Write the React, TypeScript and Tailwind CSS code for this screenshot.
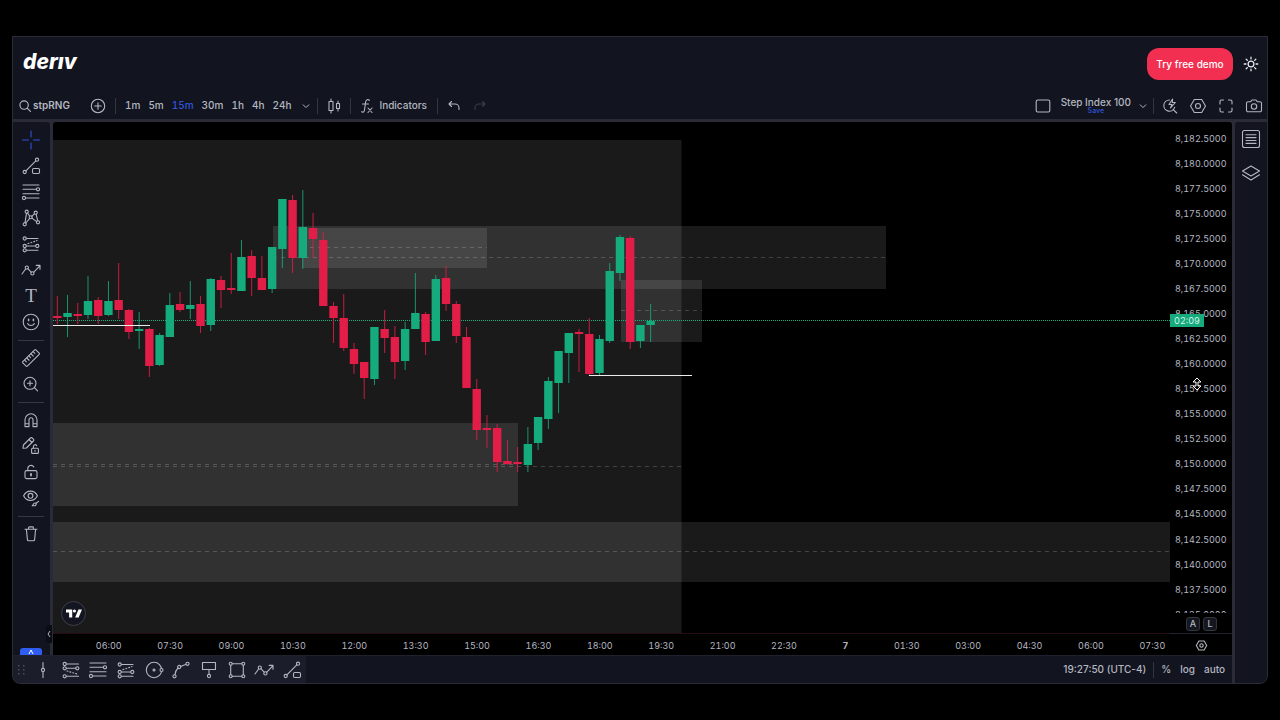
import type { ReactNode } from 'react'

type Candle = [up: number, high: number, low: number, top: number, bottom: number]

// one entry per 15 minute bar, values are vertical chart units
const CANDLES: Candle[] = [
  [0, 296, 324, 316, 318],
  [1, 295, 337, 313, 317],
  [0, 303, 324, 314, 316],
  [1, 276, 319, 301, 315],
  [0, 297, 324, 300, 316],
  [1, 281, 316, 301, 315],
  [0, 263, 319, 300, 310],
  [0, 309, 339, 310, 332],
  [1, 312, 349, 329, 331],
  [0, 328, 377, 329, 366],
  [1, 333, 366, 335, 365],
  [1, 293, 337, 305, 337],
  [0, 292, 312, 304, 310],
  [1, 281, 319, 305, 309],
  [0, 296, 333, 304, 326],
  [1, 278, 331, 279, 325],
  [0, 276, 308, 280, 290],
  [0, 253, 294, 288, 290],
  [1, 240, 291, 257, 291],
  [0, 250, 296, 256, 278],
  [0, 256, 290, 278, 290],
  [1, 247, 293, 247, 289],
  [1, 199, 268, 199, 249],
  [0, 195, 273, 200, 258],
  [1, 190, 269, 227, 258],
  [0, 213, 258, 228, 239],
  [0, 232, 306, 240, 306],
  [0, 302, 343, 306, 318],
  [0, 294, 351, 318, 348],
  [0, 343, 374, 349, 364],
  [0, 362, 399, 362, 378],
  [1, 327, 385, 327, 379],
  [0, 310, 353, 329, 338],
  [0, 326, 379, 337, 362],
  [1, 322, 370, 329, 361],
  [1, 273, 329, 313, 329],
  [0, 312, 355, 314, 342],
  [1, 275, 341, 279, 341],
  [0, 266, 311, 278, 304],
  [0, 301, 343, 304, 336],
  [0, 327, 388, 337, 388],
  [0, 379, 440, 389, 430],
  [0, 415, 448, 428, 430],
  [0, 424, 472, 428, 462],
  [0, 440, 465, 461, 464],
  [0, 447, 472, 462, 464],
  [1, 427, 472, 444, 465],
  [1, 417, 450, 417, 443],
  [1, 377, 429, 381, 419],
  [1, 351, 413, 351, 383],
  [1, 333, 383, 333, 353],
  [0, 329, 372, 332, 334],
  [0, 318, 375, 334, 374],
  [1, 335, 375, 339, 373],
  [1, 263, 343, 271, 341],
  [1, 235, 281, 237, 273],
  [0, 236, 349, 238, 342],
  [1, 325, 348, 325, 341],
  [1, 304, 342, 321, 325],
]

const PRICES = [
  '8,182.5000', '8,180.0000', '8,177.5000', '8,175.0000', '8,172.5000',
  '8,170.0000', '8,167.5000', '8,165.0000', '8,162.5000', '8,160.0000',
  '8,157.5000', '8,155.0000', '8,152.5000', '8,150.0000', '8,147.5000',
  '8,145.0000', '8,142.5000', '8,140.0000', '8,137.5000', '8,135.0000',
]

const TIMES = [
  '06:00', '07:30', '09:00', '10:30', '12:00', '13:30', '15:00', '16:30', '18:00',
  '19:30', '21:00', '22:30', '7', '01:30', '03:00', '04:30', '06:00', '07:30',
]

const INTERVALS = ['1m', '5m', '15m', '30m', '1h', '4h', '24h']

function Icon({ children, className = 'size-5' }: { children: ReactNode; className?: string }) {
  return (
    <svg
      viewBox="0 0 20 20"
      className={className}
      fill="none"
      stroke="currentColor"
      strokeWidth="1.1"
      strokeLinecap="round"
      strokeLinejoin="round"
      aria-hidden="true"
    >
      {children}
    </svg>
  )
}

const trendShape = (
  <>
    <circle cx="16" cy="3.7" r="1.6" />
    <circle cx="3.7" cy="16" r="1.6" />
    <path d="M4.9 14.8 14.8 4.9" />
    <rect x="11.5" y="12.5" width="7" height="5" rx="1.2" />
  </>
)

const fibLines = (
  <>
    <path d="M2 3h16M2 7.3h13.4M2 11.7h16M4.6 16H18" />
    <circle cx="17" cy="7.3" r="1.6" />
    <circle cx="3" cy="16" r="1.6" />
  </>
)

const arrowPath = (
  <>
    <path d="m1 14 3.6-5M7 8.8l3.2 3.4M12.6 12.3 19 5.7M15.2 5.4H19v3.8" />
    <circle cx="5.8" cy="7.6" r="1.6" />
    <circle cx="11.4" cy="13.4" r="1.6" />
  </>
)

const forecast = (
  <>
    <path d="M5.4 4.5H17M5.4 12h9.2M5.4 16.3H17" />
    <path d="M7 9.6l9-3" strokeDasharray="1 2" />
    <circle cx="3.7" cy="4.5" r="1.6" />
    <circle cx="3.7" cy="12" r="1.6" />
    <circle cx="16.3" cy="12" r="1.6" />
    <circle cx="3.7" cy="16.3" r="1.6" />
  </>
)

const DRAW_TOOLS: { label: string; icon: ReactNode }[][] = [
  [
    { label: 'Crosshair', icon: <path className="text-[#3054d8]" stroke="currentColor" d="M10 1v6M10 13v6M1.5 10h6M12.5 10h6" /> },
    { label: 'Trend line', icon: trendShape },
    { label: 'Fib retracement', icon: fibLines },
    {
      label: 'Patterns',
      icon: (
        <>
          <path d="M4 14.8 5.5 5.3M6.6 5.1l2 2.9M10.8 8.3l2.6-2.4M15.1 6.2l1.6 6.6M4.8 15l3.7-4.4M11 10.1l4.5 3.5" />
          <circle cx="5.7" cy="3.7" r="1.6" />
          <circle cx="14.7" cy="4.7" r="1.6" />
          <circle cx="3.7" cy="16.3" r="1.6" />
          <circle cx="17" cy="14.3" r="1.6" />
          <circle cx="9.7" cy="9.3" r="1.5" />
        </>
      ),
    },
    { label: 'Forecast', icon: forecast },
    { label: 'Path', icon: arrowPath },
    { label: 'Text', icon: null },
    {
      label: 'Emoji',
      icon: (
        <>
          <circle cx="10" cy="10" r="7.8" />
          <path d="M7.6 7.4v1.2M12.4 7.4v1.2" strokeWidth="1.6" />
          <path d="M6.6 11.6c1.4 2.6 5.4 2.6 6.8 0" />
        </>
      ),
    },
  ],
  [
    {
      label: 'Measure',
      icon: (
        <g transform="rotate(-45 10 10)">
          <rect x="0.8" y="6.8" width="18.4" height="6.4" rx="0.8" />
          <path d="M4 7v2.4M7 7v3.2M10 7v2.4M13 7v3.2M16 7v2.4" />
        </g>
      ),
    },
    {
      label: 'Zoom in',
      icon: (
        <>
          <circle cx="9" cy="9.3" r="6" />
          <path d="m13.4 13.7 3.2 3.2M9 6.8v5M6.5 9.3h5" />
        </>
      ),
    },
  ],
  [
    {
      label: 'Magnet',
      icon: <path d="M4 16.6V9.8a6 6 0 0 1 12 0v6.8h-4V9.8a2 2 0 0 0-4 0v6.8zM4 13.8h4M12 13.8h4" />,
    },
    {
      label: 'Drawing mode',
      icon: (
        <>
          <path d="m2 12.2.4-3.2 7-7a1.3 1.3 0 0 1 1.9 0l1.1 1.1a1.3 1.3 0 0 1 0 1.9l-7 7zM8 3.5l3 3" />
          <rect x="10.6" y="12.2" width="6.8" height="5.2" rx="1" />
          <path d="M12.4 12v-1.6a1.7 1.7 0 0 1 3.3-.6M14 14.4v.9" />
        </>
      ),
    },
    {
      label: 'Lock drawings',
      icon: (
        <>
          <rect x="4" y="8.6" width="12" height="8" rx="1.6" />
          <path d="M6.8 8.4V6.6a3.2 3.2 0 0 1 6-1.5" />
          <path d="M10 11.8v1.8" strokeWidth="1.8" />
        </>
      ),
    },
    {
      label: 'Hide drawings',
      icon: (
        <>
          <path d="M2.6 7.8C5.6 1.6 13.4 1.6 16.4 7.8 13.4 14 5.6 14 2.6 7.8z" />
          <circle cx="9.5" cy="7.8" r="2.4" />
          <path d="M11.2 17.8c1.2-.4.8-2.8 2.8-2.8 1.8 0 1.6 2.8-.8 2.8zM15.4 15l2.2-1.6" />
        </>
      ),
    },
  ],
  [
    {
      label: 'Remove',
      icon: (
        <path d="M4 5.2h12M5.4 5.2l1 10.4a1.3 1.3 0 0 0 1.3 1.2h4.6a1.3 1.3 0 0 0 1.3-1.2l1-10.4M7.6 5V3.8a.9.9 0 0 1 .9-.9h3a.9.9 0 0 1 .9.9V5" />
      ),
    },
  ],
]

const FAVORITES: { label: string; icon: ReactNode }[] = [
  {
    label: 'Vertical line',
    icon: (
      <>
        <circle cx="10" cy="10" r="1.6" />
        <path d="M10 2.5v5.9M10 11.6v5.9" />
      </>
    ),
  },
  {
    label: 'Short position',
    icon: (
      <>
        <path d="M5.4 4H17.5M5.4 8.3h9.2M5.4 16.3H17.5" />
        <path d="M6 11l10 3" strokeDasharray="1 2" />
        <circle cx="3.7" cy="4" r="1.6" />
        <circle cx="3.7" cy="8.3" r="1.6" />
        <circle cx="16.3" cy="8.3" r="1.6" />
        <circle cx="3.7" cy="16.3" r="1.6" />
      </>
    ),
  },
  { label: 'Fib retracement', icon: fibLines },
  { label: 'Long position', icon: forecast },
  {
    label: 'Circle',
    icon: (
      <>
        <circle cx="10" cy="10" r="7.7" />
        <circle cx="10" cy="10" r="1" />
        <circle cx="17.5" cy="10" r="1.5" fill="#1b1e2a" />
      </>
    ),
  },
  {
    label: 'Curve',
    icon: (
      <>
        <path d="M4 14.8C4.4 11.4 5.5 9.4 7 8M9.8 6.5c1.4-.8 3-1.4 5-2" />
        <circle cx="3.5" cy="16.3" r="1.6" />
        <circle cx="8.2" cy="7" r="1.6" />
        <circle cx="16.5" cy="3.8" r="1.6" />
      </>
    ),
  },
  {
    label: 'Callout',
    icon: (
      <>
        <rect x="3.5" y="2.5" width="13" height="7" />
        <path d="M10 9.5v5" />
        <circle cx="10" cy="16" r="1.6" />
      </>
    ),
  },
  {
    label: 'Rectangle',
    icon: (
      <>
        <path d="M5.2 3.7h9.6M5.2 16.3h9.6M3.7 5.2v9.6M16.3 5.2v9.6" />
        <circle cx="3.7" cy="3.7" r="1.5" />
        <circle cx="16.3" cy="3.7" r="1.5" />
        <circle cx="3.7" cy="16.3" r="1.5" />
        <circle cx="16.3" cy="16.3" r="1.5" />
      </>
    ),
  },
  { label: 'Path', icon: arrowPath },
  { label: 'Trend line', icon: trendShape },
]

function Header() {
  return (
    <header className="flex h-[54px] items-center justify-between pr-2 pl-[10px]">
      <a href="#" aria-label="deriv" className="pb-1 text-[21px] leading-6 font-extrabold text-white italic">
        derıv
      </a>
      <div className="flex items-center gap-[10px]">
        <button className="h-8 w-[86px] rounded-xl bg-[#f22f50] text-[10px] font-medium text-white">
          Try free demo
        </button>
        <button aria-label="Switch theme" className="text-[#e6e8ee]">
          <Icon className="size-4">
            <circle cx="10" cy="10" r="3.6" strokeWidth="1.6" />
            <path
              strokeWidth="1.6"
              d="M10 1.5v2.2M10 16.3v2.2M1.5 10h2.2M16.3 10h2.2M4 4l1.5 1.5M14.5 14.5 16 16M4 16l1.5-1.5M14.5 5.5 16 4"
            />
          </Icon>
        </button>
      </div>
    </header>
  )
}

function Divider() {
  return <span className="h-4 w-px bg-[#33353f]" />
}

function Chevron() {
  return (
    <Icon className="size-2">
      <path d="m3 7 7 7 7-7" strokeWidth="2.5" />
    </Icon>
  )
}

function TopBar() {
  return (
    <nav className="flex h-7 items-center justify-between pt-px pr-[3px] pl-[6px] text-[10px]">
      <div className="flex items-center">
        <button className="flex w-[69px] items-center gap-[2px] font-semibold">
          <Icon className="size-3">
            <circle cx="8.5" cy="8.5" r="7" strokeWidth="1.9" />
            <path d="m14 14 5 5" strokeWidth="1.9" />
          </Icon>
          stpRNG
        </button>
        <button aria-label="Compare symbol" className="mr-[7px]">
          <Icon>
            <circle cx="10" cy="10" r="6.7" />
            <path d="M10 6.7v6.6M6.7 10h6.6" />
          </Icon>
        </button>
        <Divider />
        <div className="ml-[9px] flex items-center gap-2 tabular-nums">
          {INTERVALS.map((item) => (
            <button key={item} className={item === '15m' ? 'font-medium text-[#3054d8]' : 'font-medium'}>
              {item}
            </button>
          ))}
          <button aria-label="More intervals" className="pl-[3px]">
            <Chevron />
          </button>
        </div>
        <span className="ml-[7px] flex items-center gap-[6px]">
          <Divider />
          <button aria-label="Chart type">
            <Icon>
              <path d="M5 5.5h4v9H5zM7 3v2.5M7 14.5V17M12.5 7.5h3v5h-3zM14 5v2.5M14 12.5V15" />
            </Icon>
          </button>
          <Divider />
          <button className="flex items-center font-medium">
            <Icon className="mr-0.5 size-5">
              <path d="M12.5 4.2c-2.3-1.2-3.600-.3-3.900 2L7.500 14c-.3 2-1.500 2.500-3 1.800M5.500 8h6M11 12l4 4.500M15 12l-4 4.500" />
            </Icon>
            Indicators
          </button>
        </span>
        <span className="ml-[10px] flex items-center gap-[6px]">
          <Divider />
          <button aria-label="Undo">
            <Icon>
              <path d="M7.5 5.5 5 8l2.5 2.5M5.2 8H11a4 4 0 0 1 4 4v1.5" />
            </Icon>
          </button>
          <button aria-label="Redo" disabled className="text-[#3b3d48]">
            <Icon>
              <path d="M12.5 5.5 15 8l-2.5 2.5M14.8 8H9a4 4 0 0 0-4 4v1.5" />
            </Icon>
          </button>
        </span>
      </div>

      <div className="flex items-center gap-2">
        <button aria-label="Layout setup">
          <Icon>
            <rect x="3.2" y="4" width="13.6" height="12" rx="1.5" />
          </Icon>
        </button>
        <button className="flex flex-col items-center leading-[10px] font-medium">
          <span className="text-[10px]">Step Index 100</span>
          <span className="text-[7px] leading-2 text-[#3054d8]">Save</span>
        </button>
        <span className="flex items-center gap-[6px]">
          <button aria-label="Manage layouts">
            <Chevron />
          </button>
          <Divider />
          <button aria-label="Quick search">
            <Icon>
              <path d="M9.5 4a5.6 5.6 0 1 0 5.3 7.2M13 13.3l3.7 3.7M12.6 3 9 8.5h3L10.5 12l4.8-5.5h-3z" />
            </Icon>
          </button>
        </span>
        <button aria-label="Chart settings">
          <Icon>
            <path d="M6.3 3.5h7.4l3.8 6.5-3.8 6.5H6.3L2.5 10z" />
            <circle cx="10" cy="10" r="2.5" />
          </Icon>
        </button>
        <button aria-label="Fullscreen">
          <Icon>
            <path d="M4 8V5.5A1.5 1.5 0 0 1 5.5 4H7.5M12.5 4h2A1.5 1.5 0 0 1 16 5.5V8M16 12v2.5a1.5 1.5 0 0 1-1.5 1.5h-2M7.5 16h-2A1.5 1.5 0 0 1 4 14.5V12" />
          </Icon>
        </button>
        <button aria-label="Take a snapshot">
          <Icon>
            <path d="M4 5.8h2.5L8 4h4l1.5 1.8H16a1.5 1.5 0 0 1 1.5 1.5v7A1.5 1.5 0 0 1 16 15.8H4a1.5 1.5 0 0 1-1.5-1.5v-7A1.5 1.5 0 0 1 4 5.8z" />
            <circle cx="10" cy="10.5" r="2.7" />
          </Icon>
        </button>
      </div>
    </nav>
  )
}

function DrawingBar() {
  return (
    <aside className="relative flex w-[37px] flex-col rounded-tr-[3px] bg-[#12141f] pt-[5px] pr-px">
      {DRAW_TOOLS.map((group, i) => (
        <div key={i} className="flex flex-col items-center">
          {i > 0 && <hr className="mt-[5px] mb-1 w-[26px] border-[#353843]" />}
          {group.map((tool) => (
            <button key={tool.label} aria-label={tool.label} className="flex h-[26px] w-full items-center justify-center">
              {tool.icon ? (
                <Icon>{tool.icon}</Icon>
              ) : (
                <span className="font-['Liberation_Serif'] text-[19px] leading-5">T</span>
              )}
            </button>
          ))}
        </div>
      ))}
      <button
        aria-label="Favorites"
        className="mx-auto mt-auto flex h-[7px] w-[22px] items-center justify-center rounded-t-[3px] bg-[#2f5df0] text-white"
      >
        <svg viewBox="0 0 6 5" className="h-[5px] w-[6px]" fill="none" stroke="currentColor">
          <path d="M1 5 3 1l2 4" />
        </svg>
      </button>
      <button
        aria-label="Hide drawing toolbar"
        className="absolute right-[-2px] bottom-3 flex h-[18px] w-[6px] items-center justify-center rounded-l-[3px] bg-[#0c0d14]"
      >
        <svg viewBox="0 0 4 8" className="h-2 w-1" fill="none" stroke="currentColor">
          <path d="M3 1 1 4l2 3" />
        </svg>
      </button>
    </aside>
  )
}

function Zone({ x, y, width, height }: { x: number; y: number; width: number | string; height: number }) {
  return <rect x={x} y={y} width={width} height={height} fill="#fff" fillOpacity="0.1" />
}

function Plot() {
  return (
    <div className="relative min-w-0 flex-1 overflow-hidden border-b border-[#2a0d14]">
      <svg className="absolute inset-0 h-full w-full" aria-label="Price chart">
        <g transform="translate(-53 -122)">
          <Zone x={53} y={140} width={628.5} height={500} />
          <Zone x={273} y={226} width={613} height={63} />
          <Zone x={302} y={228} width={185} height={40} />
          <Zone x={621} y={280} width={81} height={62} />
          <Zone x={53} y={423} width={465} height={83} />
          <Zone x={53} y={522} width="100%" height={60} />
          <g stroke="#fff" strokeOpacity="0.18" strokeDasharray="4 4">
            <path d="M273 257.5H886M302 247.5H487M621 310.5H702M53 464.5H518M53 466.5H681" />
            <path d="M53 551.5H3000" />
          </g>
          <path d="M53 320.5H3000" stroke="#17b07f" strokeDasharray="1 1" />
          {CANDLES.map(([up, high, low, top, bottom], i) => {
            const x = 57.3 + i * 10.23
            const color = up ? '#16ab7c' : '#e11d48'
            return (
              <g key={i} fill={color}>
                <rect x={x - 0.5} y={high} width="1" height={low - high} fillOpacity="0.85" />
                <rect x={x - 4.2} y={top} width="8.4" height={bottom - top} />
              </g>
            )
          })}
          <path d="M53 325.5H150M589 375.5H692" stroke="#ececec" />
        </g>
      </svg>
      <a
        href="#"
        aria-label="TradingView"
        className="absolute bottom-[7px] left-2 flex size-[25px] items-center justify-center rounded-full border border-[#3c3f4a] bg-[#131620] text-white"
      >
        <svg viewBox="0 0 36 20" className="w-4" fill="currentColor">
          <path d="M0 1h14v18H7V8H0z" />
          <circle cx="19" cy="4.5" r="3.5" />
          <path d="M28 1h8l-7.5 18h-8z" />
        </svg>
      </a>
    </div>
  )
}

function PriceScale() {
  return (
    <div className="relative w-[62px] border-b border-[#22242c] pt-1">
      <div className="h-[487px] overflow-hidden">
        <ul className="flex h-[501px] flex-col pl-[5px]">
          {PRICES.map((price) => (
            <li key={price} className="flex flex-1 items-center">
              {price}
            </li>
          ))}
        </ul>
      </div>
      <div className="mt-1 flex gap-[3px] pl-[16px] font-medium">
        <button className="size-[14px] rounded-[3px] border border-[#33353f] bg-[#15171f] leading-3">A</button>
        <button className="size-[14px] rounded-[3px] border border-[#33353f] bg-[#15171f] leading-3">L</button>
      </div>
      <span className="absolute top-[192px] left-0 w-[34px] bg-[#16ab7c] text-center leading-[13px] text-[#d3f3e8]">
        02:09
      </span>
      <svg viewBox="0 0 10 14" className="absolute top-[255px] left-[22px] h-[14px] w-[10px]" fill="#000" stroke="#fff">
        <path d="M5 1 9 5H6v4h3l-4 4-4-4h3V5H1z" />
      </svg>
    </div>
  )
}

function TimeScale() {
  return (
    <div className="flex h-[21px] items-center pt-0.5 pl-[25px]">
      <ul className="flex flex-1">
        {TIMES.map((time, i) => (
          <li key={i} className={time === '7' ? 'flex-1 basis-0 text-center font-bold' : 'flex-1 basis-0 text-center'}>
            {time}
          </li>
        ))}
      </ul>
      <button aria-label="Axis settings" className="w-[49px] pl-3">
        <Icon className="size-[13px]">
          <path strokeWidth="1.7" d="M6 3h8l4 7-4 7H6l-4-7z" />
          <circle cx="10" cy="10" r="2.6" strokeWidth="1.7" />
        </Icon>
      </button>
    </div>
  )
}

function BottomBar() {
  return (
    <footer className="flex h-7 items-stretch justify-between rounded-bl-lg border-t border-[#1f222d] bg-[#12141f] pr-[7px]">
      <div className="flex items-center rounded-bl-lg bg-[#1b1e2a] pr-1 pl-[5px]">
        <svg viewBox="0 0 7 10" className="mr-2 h-[10px] w-[7px]" fill="#4b4e5a">
          <path d="M0 0h1.5v1.5H0zM5 0h1.5v1.5H5zM0 4h1.5v1.5H0zM5 4h1.5v1.5H5zM0 8h1.5v1.5H0zM5 8h1.5v1.5H5z" />
        </svg>
        <div className="flex w-[269px] justify-between">
          {FAVORITES.map((tool) => (
            <button key={tool.label} aria-label={tool.label}>
              <Icon>{tool.icon}</Icon>
            </button>
          ))}
        </div>
      </div>
      <div className="flex items-center text-[10px] font-medium">
        <button className="mr-[7px]">19:27:50 (UTC-4)</button>
        <Divider />
        <button className="ml-[7px]">%</button>
        <button className="ml-[9px]">log</button>
        <button className="ml-[9px]">auto</button>
      </div>
    </footer>
  )
}

export default function App() {
  return (
    <div className="min-h-screen bg-black px-3 pt-9 font-['Inter',sans-serif] text-[#b4b7c1]">
      <div className="overflow-hidden rounded-b-lg border border-[#2a2c37] bg-[#12141f]">
        <Header />
        <TopBar />
        <div className="flex gap-[3px] bg-[#2a2b36] pt-[3px]">
          <div className="flex min-w-0 flex-1 flex-col">
            <div className="flex gap-[3px]">
              <DrawingBar />
              <main className="flex min-w-0 flex-1 flex-col rounded-t-[3px] bg-black text-[9px] tabular-nums">
                <div className="flex h-[512px]">
                  <Plot />
                  <PriceScale />
                </div>
                <TimeScale />
              </main>
            </div>
            <BottomBar />
          </div>
          <aside className="flex w-8 flex-col items-center gap-[14px] rounded-tl-[3px] bg-[#12141f] pt-[7px]">
            <button aria-label="Watchlist">
              <Icon>
                <rect x="1.5" y="1.5" width="17" height="17" rx="2" />
                <path d="M5 5.7h10M5 8.6h10M5 11.5h10M5 14.4h10" />
              </Icon>
            </button>
            <button aria-label="Object tree">
              <Icon>
                <path d="m10 3 8.5 5-8.5 5-8.5-5zM1.5 11.8 10 17l8.5-5.2" />
              </Icon>
            </button>
          </aside>
        </div>
      </div>
    </div>
  )
}
